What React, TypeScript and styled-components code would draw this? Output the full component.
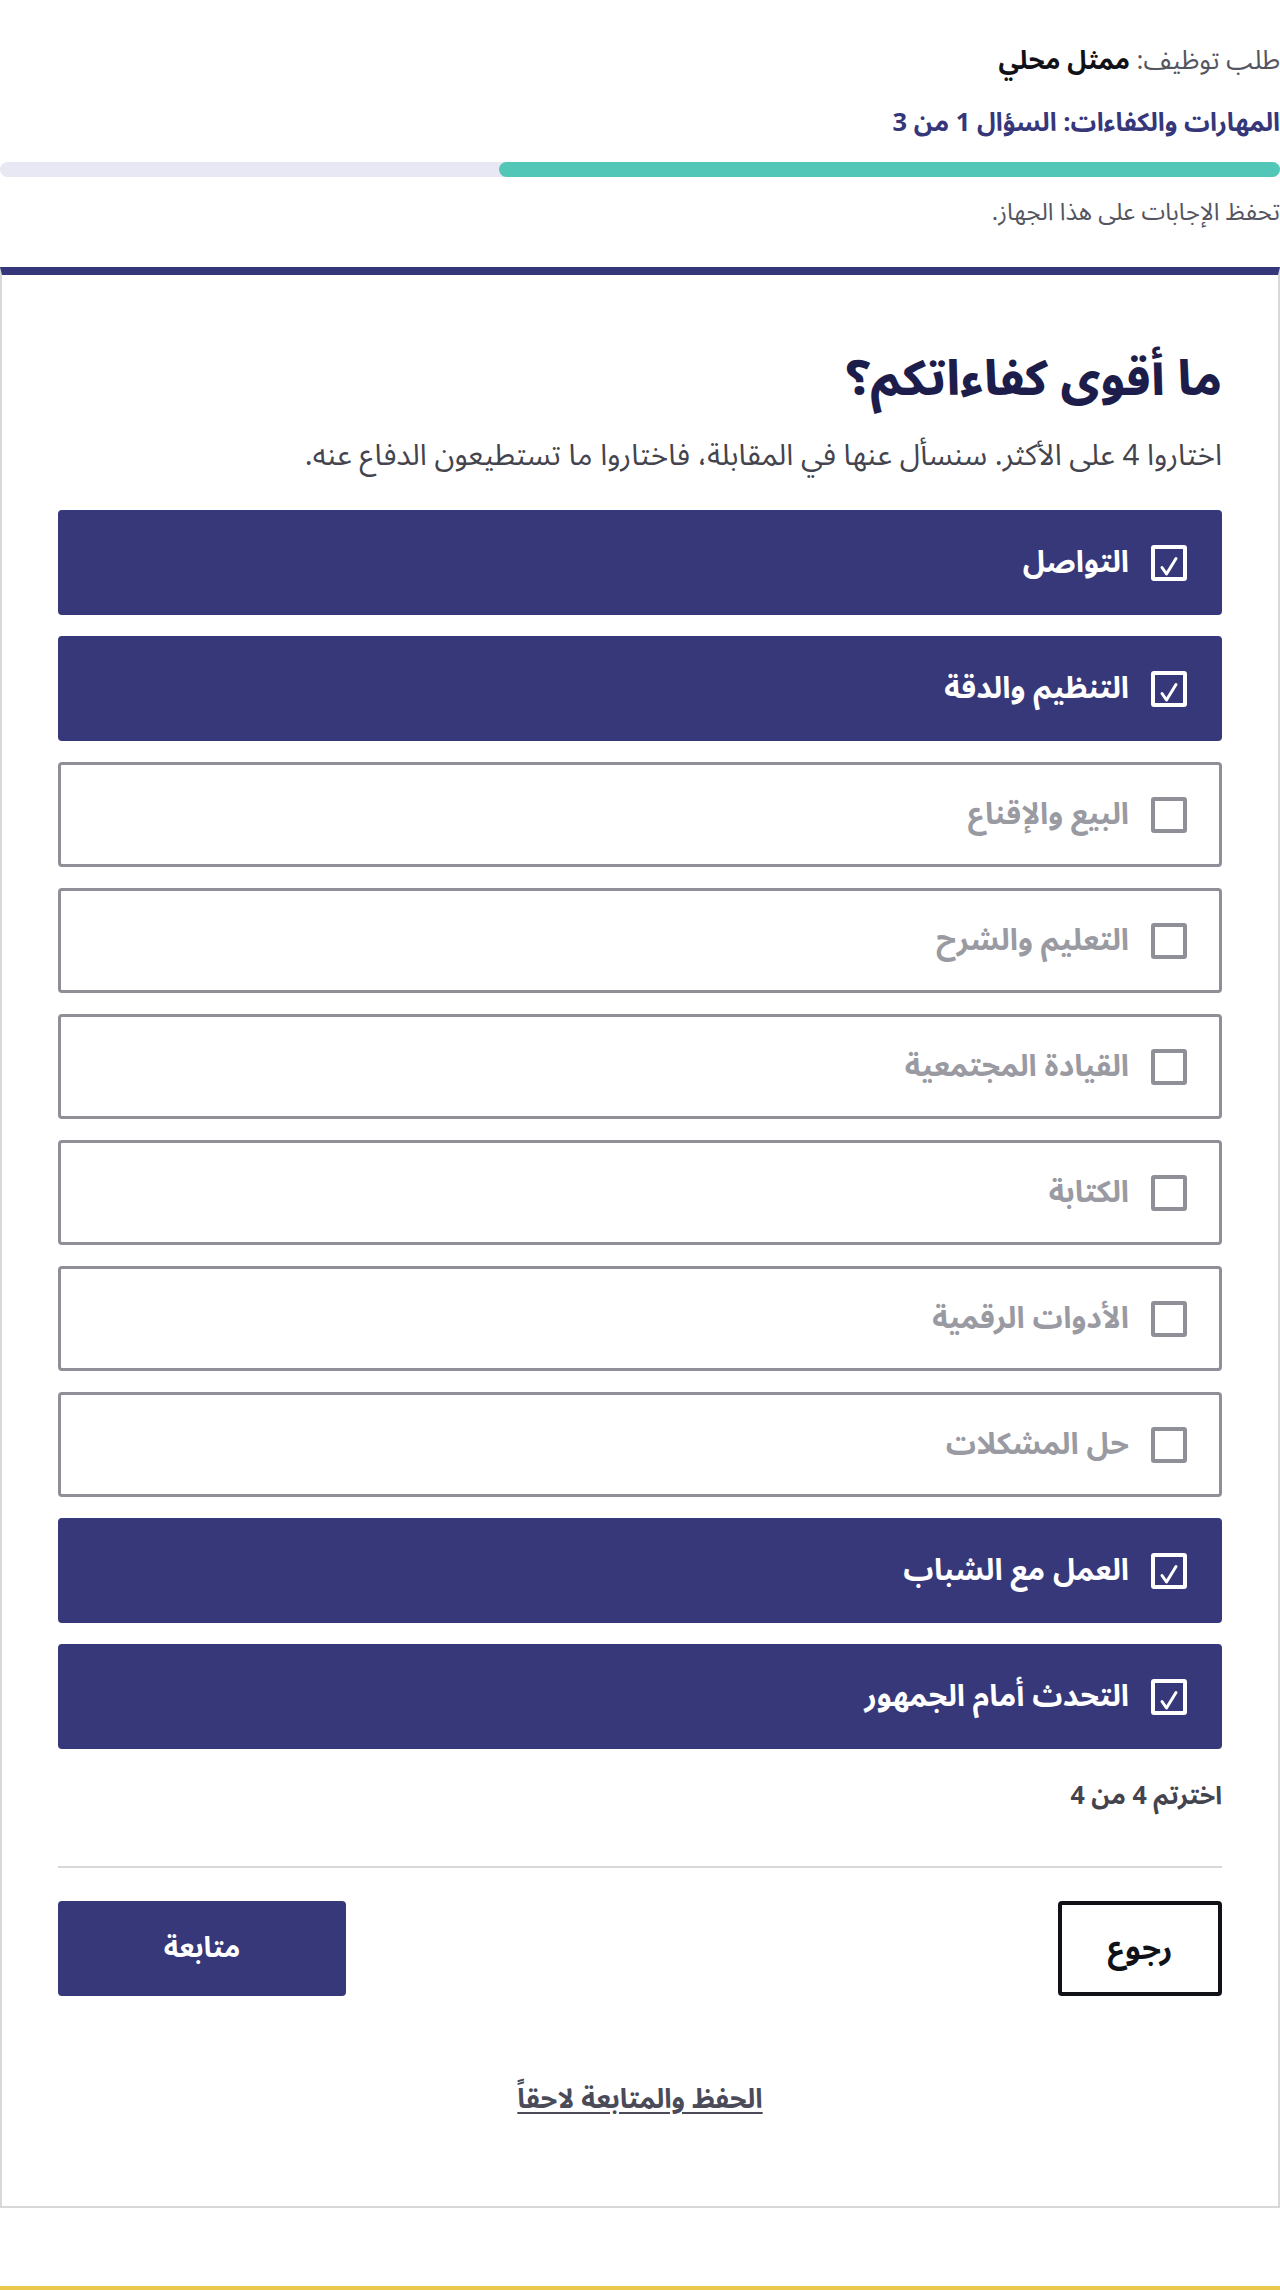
import React, { useState } from 'react';
import styled, { createGlobalStyle } from 'styled-components';

const GlobalStyle = createGlobalStyle`
    html, body {
        margin: 0;
        padding: 0;
        background: #ffffff;
    }
    body {
        font-family: "Noto Sans Arabic", "Noto Sans", "DejaVu Sans", sans-serif;
        direction: rtl;
    }
`

const SKILLS = [
    { key: 'communication', label: 'التواصل' },
    { key: 'organisation', label: 'التنظيم والدقة' },
    { key: 'sales', label: 'البيع والإقناع' },
    { key: 'teaching', label: 'التعليم والشرح' },
    { key: 'community', label: 'القيادة المجتمعية' },
    { key: 'writing', label: 'الكتابة' },
    { key: 'digital', label: 'الأدوات الرقمية' },
    { key: 'problems', label: 'حل المشكلات' },
    { key: 'youth', label: 'العمل مع الشباب' },
    { key: 'speaking', label: 'التحدث أمام الجمهور' },
]

const MAX_CHOICES = 4

const Page = styled.div`
    direction: rtl;
    min-height: 2290px;
    display: flex;
    flex-direction: column;
    border-bottom: 4px solid #e9c84c;
    box-sizing: border-box;
`

const Header = styled.header`
    padding-top: 43px;
    display: flex;
    flex-direction: column;
`

const JobLine = styled.p`
    margin: 0;
    font-size: 26px;
    line-height: 36px;
    color: #55555f;
    strong {
        color: #111118;
        font-weight: 700;
    }
`

const StepLine = styled.p`
    margin: 26px 0 0;
    font-size: 25.5px;
    line-height: 36px;
    font-weight: 700;
    color: #35377a;
`

const Track = styled.div`
    margin-top: 21px;
    height: 15px;
    border-radius: 8px;
    background: #e8e8f4;
    overflow: hidden;
    display: flex;
`

const Fill = styled.div`
    height: 100%;
    background: #52c7b8;
    border-radius: 8px 0 0 8px;
`

const SavedNote = styled.p`
    margin: 21px 0 0;
    font-size: 24px;
    line-height: 30px;
    color: #55555f;
`

const Card = styled.main`
    margin-top: 39px;
    border: 2px solid #d8d8d8;
    border-top: 8px solid #35377a;
    padding: 73px 56px 89px;
    display: flex;
    flex-direction: column;
`

const Title = styled.h1`
    margin: 0;
    font-size: 48px;
    line-height: 64px;
    font-weight: 800;
    color: #1d1d4b;
`

const Hint = styled.p`
    margin: 26px 0 0;
    font-size: 29.5px;
    line-height: 36px;
    color: #44444e;
`

const OptionList = styled.div`
    margin-top: 36px;
    display: flex;
    flex-direction: column;
    gap: 21px;
`

const Option = styled.button<{ $checked: boolean }>`
    height: 105px;
    box-sizing: border-box;
    display: flex;
    align-items: center;
    gap: 22px;
    padding: 0 32px;
    border-radius: 4px;
    border: 3px solid ${p => (p.$checked ? '#36387a' : '#8f8f98')};
    background: ${p => (p.$checked ? '#36387a' : '#ffffff')};
    color: ${p => (p.$checked ? '#ffffff' : '#9a9aa2')};
    font-family: inherit;
    font-size: 30px;
    font-weight: 700;
    text-align: right;
    cursor: pointer;
`

const Box = styled.span<{ $checked: boolean }>`
    width: 36px;
    height: 36px;
    box-sizing: border-box;
    border: 4px solid ${p => (p.$checked ? '#ffffff' : '#8f8f98')};
    border-radius: 3px;
    display: flex;
    align-items: flex-end;
    justify-content: center;
    flex-shrink: 0;
`

const Count = styled.p`
    margin: 32px 0 0;
    font-size: 25px;
    line-height: 30px;
    font-weight: 700;
    color: #44444e;
`

const Divider = styled.hr`
    margin: 55px 0 0;
    border: none;
    border-top: 2px solid #d8d8d8;
`

const Actions = styled.div`
    margin-top: 33px;
    display: flex;
    justify-content: space-between;
`

const Button = styled.button<{ $primary?: boolean }>`
    height: 95px;
    box-sizing: border-box;
    width: ${p => (p.$primary ? '288px' : '164px')};
    border-radius: 4px;
    border: 4px solid ${p => (p.$primary ? '#36387a' : '#111118')};
    background: ${p => (p.$primary ? '#36387a' : '#ffffff')};
    color: ${p => (p.$primary ? '#ffffff' : '#111118')};
    font-family: inherit;
    font-size: ${p => (p.$primary ? '28px' : '31px')};
    font-weight: 700;
    cursor: pointer;
`

const SaveLater = styled.a`
    margin-top: 87px;
    align-self: center;
    font-size: 27px;
    line-height: 34px;
    font-weight: 700;
    color: #4a4a58;
    text-decoration: underline;
    text-underline-offset: 4px;
`

// the tick sits low in the box, short left stroke and a long right one
const Check = () => (
    <svg width="22" height="22" viewBox="0 0 22 22">
        <path d="M4 12.5 L8.5 19 L18 3.5" fill="none" stroke="#ffffff" strokeWidth="3" strokeLinecap="round" strokeLinejoin="round" />
    </svg>
)

const App = () => {
    const [selected, setSelected] = useState<string[]>(['communication', 'organisation', 'youth', 'speaking'])

    const toggle = (key: string) => {
        if (selected.includes(key)) {
            setSelected(selected.filter(k => k !== key))
        } else if (selected.length < MAX_CHOICES) {
            setSelected([...selected, key])
        }
    }

    return (
        <Page>
            <GlobalStyle />
            <Header>
                <JobLine>طلب توظيف: <strong>ممثل محلي</strong></JobLine>
                <StepLine>المهارات والكفاءات: السؤال 1 من 3</StepLine>
                <Track>
                    <Fill style={{ width: '61%' }} />
                </Track>
                <SavedNote>تحفظ الإجابات على هذا الجهاز.</SavedNote>
            </Header>
            <Card>
                <Title>ما أقوى كفاءاتكم؟</Title>
                <Hint>اختاروا 4 على الأكثر. سنسأل عنها في المقابلة، فاختاروا ما تستطيعون الدفاع عنه.</Hint>
                <OptionList>
                    {SKILLS.map(({ key, label }) => {
                        const checked = selected.includes(key)
                        return (
                            <Option key={key} $checked={checked} onClick={() => toggle(key)}>
                                <Box $checked={checked}>{checked && <Check />}</Box>
                                {label}
                            </Option>
                        )
                    })}
                </OptionList>
                <Count>اخترتم {selected.length} من {MAX_CHOICES}</Count>
                <Divider />
                <Actions>
                    <Button>رجوع</Button>
                    <Button $primary>متابعة</Button>
                </Actions>
                <SaveLater href="#">الحفظ والمتابعة لاحقاً</SaveLater>
            </Card>
        </Page>
    )
}

export default App
